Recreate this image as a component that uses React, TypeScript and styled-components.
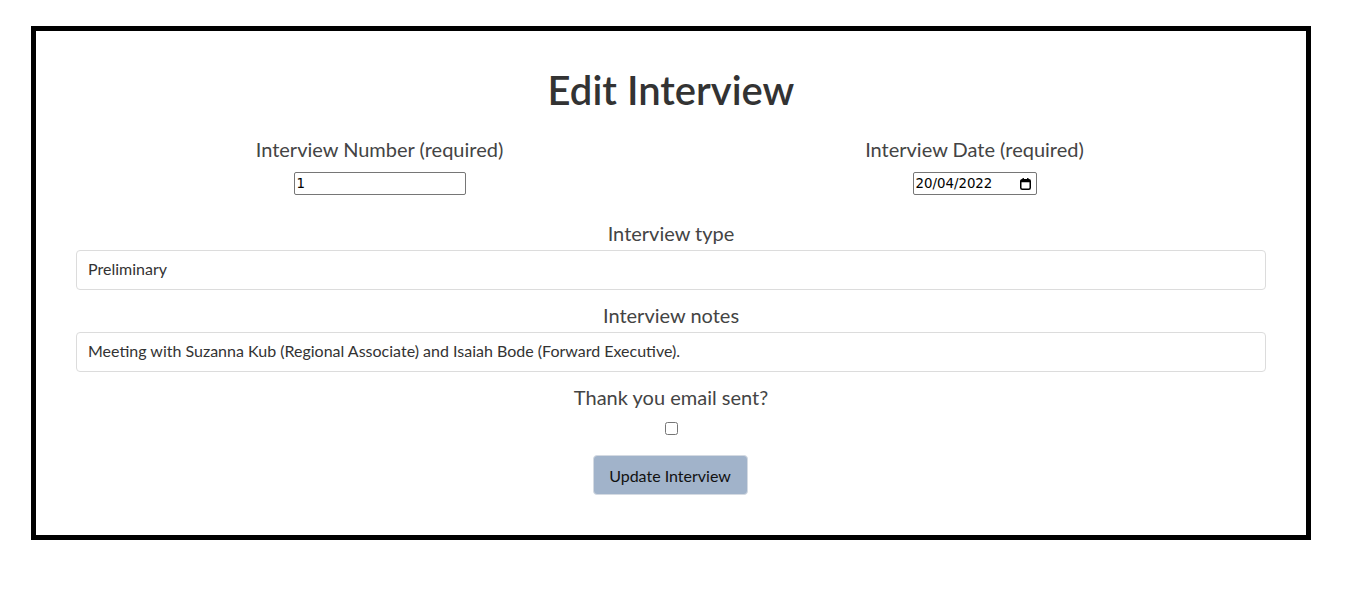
import React from "react";
import styled, { createGlobalStyle } from "styled-components";

const GlobalStyle = createGlobalStyle`
  html, body { margin: 0; padding: 0; background: #fff; }
  body { font-family: Lato, "Open Sans", sans-serif; }
`;

const Page = styled.div`
  padding: 26px 0 0 31px;
`;

const Card = styled.form`
  box-sizing: border-box;
  width: 1280px;
  height: 514px;
  border: 5px solid #000;
  padding: 35px 40px 0;
  display: flex;
  flex-direction: column;
  align-items: center;
`;

const Title = styled.h1`
  margin: 0;
  font-family: Lato, sans-serif;
  font-weight: 600;
  font-size: 40px;
  line-height: 48px;
  color: #333;
`;

const Row = styled.div`
  margin-top: 23px;
  width: 100%;
  display: grid;
  grid-template-columns: 595px 595px;
  padding-left: 6px;
  box-sizing: border-box;
`;

const Field = styled.div<{ $top?: number }>`
  display: flex;
  flex-direction: column;
  align-items: center;
  width: 100%;
  margin-top: ${(p) => p.$top ?? 0}px;
`;

const Label = styled.label`
  font-family: Lato, sans-serif;
  font-size: 20px;
  line-height: 24px;
  color: #444;
`;

const SmallInput = styled.input<{ $w: number }>`
  box-sizing: border-box;
  width: ${(p) => p.$w}px;
  height: 23px;
  border: 1px solid #767676;
  border-radius: 2px;
  padding: 1px 2px;
  font-family: "DejaVu Sans", sans-serif;
  font-size: 13.33px;
  color: #000;
  background: #fff;
  outline: none;
`;

const InputWrap = styled.div`
  position: relative;
  margin-top: 11px;
  display: flex;
`;

const CalendarIcon = styled.svg`
  position: absolute;
  right: 6px;
  top: 6px;
  width: 11px;
  height: 12px;
  pointer-events: none;
`;

const WideInput = styled.input`
  box-sizing: border-box;
  margin-top: 5px;
  width: 100%;
  height: 40px;
  border: 1px solid #dcdcdc;
  border-radius: 4px;
  padding: 0 11px 4px;
  font-family: Lato, sans-serif;
  font-size: 16px;
  color: #333;
  background: #fff;
  outline: none;
`;

const Check = styled.input`
  margin: 13px 0 0;
  width: 13px;
  height: 13px;
`;

const Button = styled.button`
  margin-top: 20px;
  margin-right: 2px;
  width: 155px;
  height: 40px;
  box-sizing: border-box;
  background: #a1b3ca;
  border: 1px solid #d4dae2;
  border-radius: 4px;
  font-family: Lato, sans-serif;
  font-size: 16px;
  color: #111;
  cursor: pointer;
`;

export default function App() {
  return (
    <>
      <GlobalStyle />
      <Page>
        <Card onSubmit={(e) => e.preventDefault()}>
          <Title>Edit Interview</Title>
          <Row>
            <Field>
              <Label>Interview Number (required)</Label>
              <InputWrap>
                <SmallInput $w={172} type="text" defaultValue="1" />
              </InputWrap>
            </Field>
            <Field>
              <Label>Interview Date (required)</Label>
              <InputWrap>
                <SmallInput $w={124} type="text" defaultValue="20/04/2022" />
                <CalendarIcon viewBox="0 0 11 12" aria-hidden="true">
                  <rect x="0.75" y="1.75" width="9.5" height="9.5" rx="1.5" fill="none" stroke="#000" strokeWidth="1.5" />
                  <rect x="0.75" y="1.75" width="9.5" height="2.5" fill="#000" />
                  <rect x="2.5" y="0" width="1.4" height="2.5" fill="#000" />
                  <rect x="7.1" y="0" width="1.4" height="2.5" fill="#000" />
                </CalendarIcon>
              </InputWrap>
            </Field>
          </Row>
          <Field $top={26}>
            <Label>Interview type</Label>
            <WideInput type="text" defaultValue="Preliminary" />
          </Field>
          <Field $top={13}>
            <Label>Interview notes</Label>
            <WideInput
              type="text"
              defaultValue="Meeting with Suzanna Kub (Regional Associate) and Isaiah Bode (Forward Executive)."
            />
          </Field>
          <Field $top={13}>
            <Label>Thank you email sent?</Label>
            <Check type="checkbox" />
          </Field>
          <Button type="submit">Update Interview</Button>
        </Card>
      </Page>
    </>
  );
}
